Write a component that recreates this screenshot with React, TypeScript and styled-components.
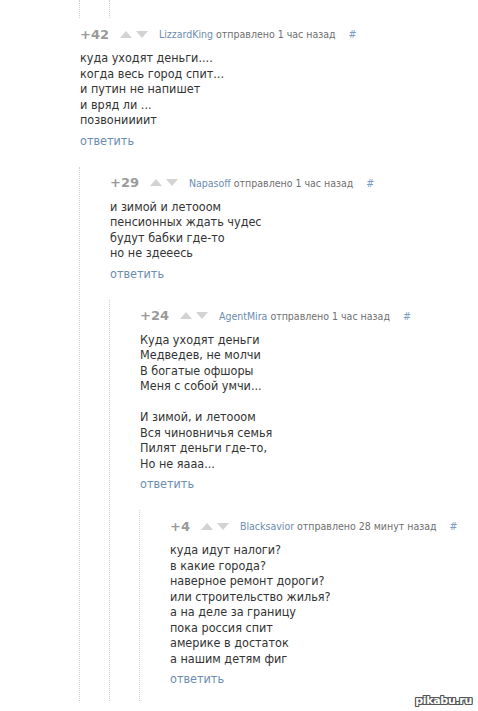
import styled, { createGlobalStyle } from 'styled-components';

const GlobalStyle = createGlobalStyle`
  html, body {
    margin: 0;
    padding: 0;
    background: #ffffff;
  }
  body {
    font-family: "DejaVu Sans Condensed", "DejaVu Sans", sans-serif;
  }
`;

const Page = styled.div`
  position: relative;
  width: 478px;
  height: 711px;
  overflow: hidden;
  background: #fff;
  padding-left: 80px;
  box-sizing: border-box;
`;

const Tail = styled.div`
  height: 18px;
  margin-left: -1px;
  border-left: 1px dotted #cfcfcf;
  margin-bottom: 6px;
`;

const TailInner = styled.div`
  height: 18px;
  margin-left: 29px;
  border-left: 1px dotted #cfcfcf;
`;

const CommentBox = styled.div`
  padding-bottom: 14px;
`;

const Header = styled.div`
  display: flex;
  align-items: center;
  height: 20px;
  white-space: nowrap;
`;

const Score = styled.span`
  font-family: "DejaVu Sans", sans-serif;
  font-weight: bold;
  font-size: 13px;
  color: #9a9a9a;
  margin-right: 11px;
`;

const Votes = styled.span`
  display: flex;
  align-items: center;
  gap: 4px;
  margin-right: 11px;
`;

const Author = styled.span`
  font-size: 10.5px;
  color: #6c8db0;
`;

const Meta = styled.span`
  font-size: 10.5px;
  color: #6f6f6f;
  margin-left: 3px;
`;

const Hash = styled.span`
  font-size: 10.5px;
  color: #7c9cc0;
  margin-left: 13px;
`;

const Body = styled.div`
  margin-top: 6px;
  font-size: 12.5px;
  line-height: 15.5px;
  color: #333;
  white-space: pre-line;
`;

const Reply = styled.div`
  margin-top: 5px;
  font-size: 12.5px;
  line-height: 16px;
  color: #6c8db0;
`;

const Children = styled.div`
  margin-top: 4px;
  margin-left: -1px;
  padding-top: 6px;
  padding-left: 30px;
  border-left: 1px dotted #cfcfcf;
`;

const Watermark = styled.div`
  position: absolute;
  right: 6px;
  bottom: 4px;
  font-family: "DejaVu Sans", sans-serif;
  font-weight: bold;
  font-size: 11px;
  letter-spacing: -0.3px;
  color: #fff;
  text-shadow: 1px 0 0 #555, -1px 0 0 #555, 0 1px 0 #555, 0 -1px 0 #555,
    1px 1px 0 #555, -1px -1px 0 #555, 1px -1px 0 #555, -1px 1px 0 #555;
`;

const Arrow = ({ down }: { down?: boolean }) => (
  <svg width="12" height="7" viewBox="0 0 12 7">
    <path d={down ? 'M0 0 L12 0 L6 7 Z' : 'M0 7 L12 7 L6 0 Z'} fill="#d3d3d3" />
  </svg>
);

interface CommentData {
  score: string;
  author: string;
  time: string;
  text: string;
}

const comments: CommentData[] = [
  {
    score: '+42',
    author: 'LizzardKing',
    time: 'отправлено 1 час назад',
    text: 'куда уходят деньги....\nкогда весь город спит...\nи путин не напишет\nи вряд ли ...\nпозвониииит',
  },
  {
    score: '+29',
    author: 'Napasoff',
    time: 'отправлено 1 час назад',
    text: 'и зимой и летооом\nпенсионных ждать чудес\nбудут бабки где-то\nно не здееесь',
  },
  {
    score: '+24',
    author: 'AgentMira',
    time: 'отправлено 1 час назад',
    text: 'Куда уходят деньги\nМедведев, не молчи\nВ богатые офшоры\nМеня с собой умчи...\n\u00a0\nИ зимой, и летооом\nВся чиновничья семья\nПилят деньги где-то,\nНо не яааа...',
  },
  {
    score: '+4',
    author: 'Blacksavior',
    time: 'отправлено 28 минут назад',
    text: 'куда идут налоги?\nв какие города?\nнаверное ремонт дороги?\nили строительство жилья?\nа на деле за границу\nпока россия спит\nамерике в достаток\nа нашим детям фиг',
  },
];

function Comment({ c }: { c: CommentData }) {
  return (
    <CommentBox>
      <Header>
        <Score>{c.score}</Score>
        <Votes>
          <Arrow />
          <Arrow down />
        </Votes>
        <Author>{c.author}</Author>
        <Meta>{c.time}</Meta>
        <Hash>#</Hash>
      </Header>
      <Body>{c.text}</Body>
      <Reply>ответить</Reply>
    </CommentBox>
  );
}

function Thread({ list }: { list: CommentData[] }) {
  const [first, ...rest] = list;
  return (
    <>
      <Comment c={first} />
      {rest.length > 0 && (
        <Children>
          <Thread list={rest} />
        </Children>
      )}
    </>
  );
}

export default function App() {
  return (
    <>
      <GlobalStyle />
      <Page>
        <Tail>
          <TailInner />
        </Tail>
        <Thread list={comments} />
        <Watermark>pikabu.ru</Watermark>
      </Page>
    </>
  );
}
